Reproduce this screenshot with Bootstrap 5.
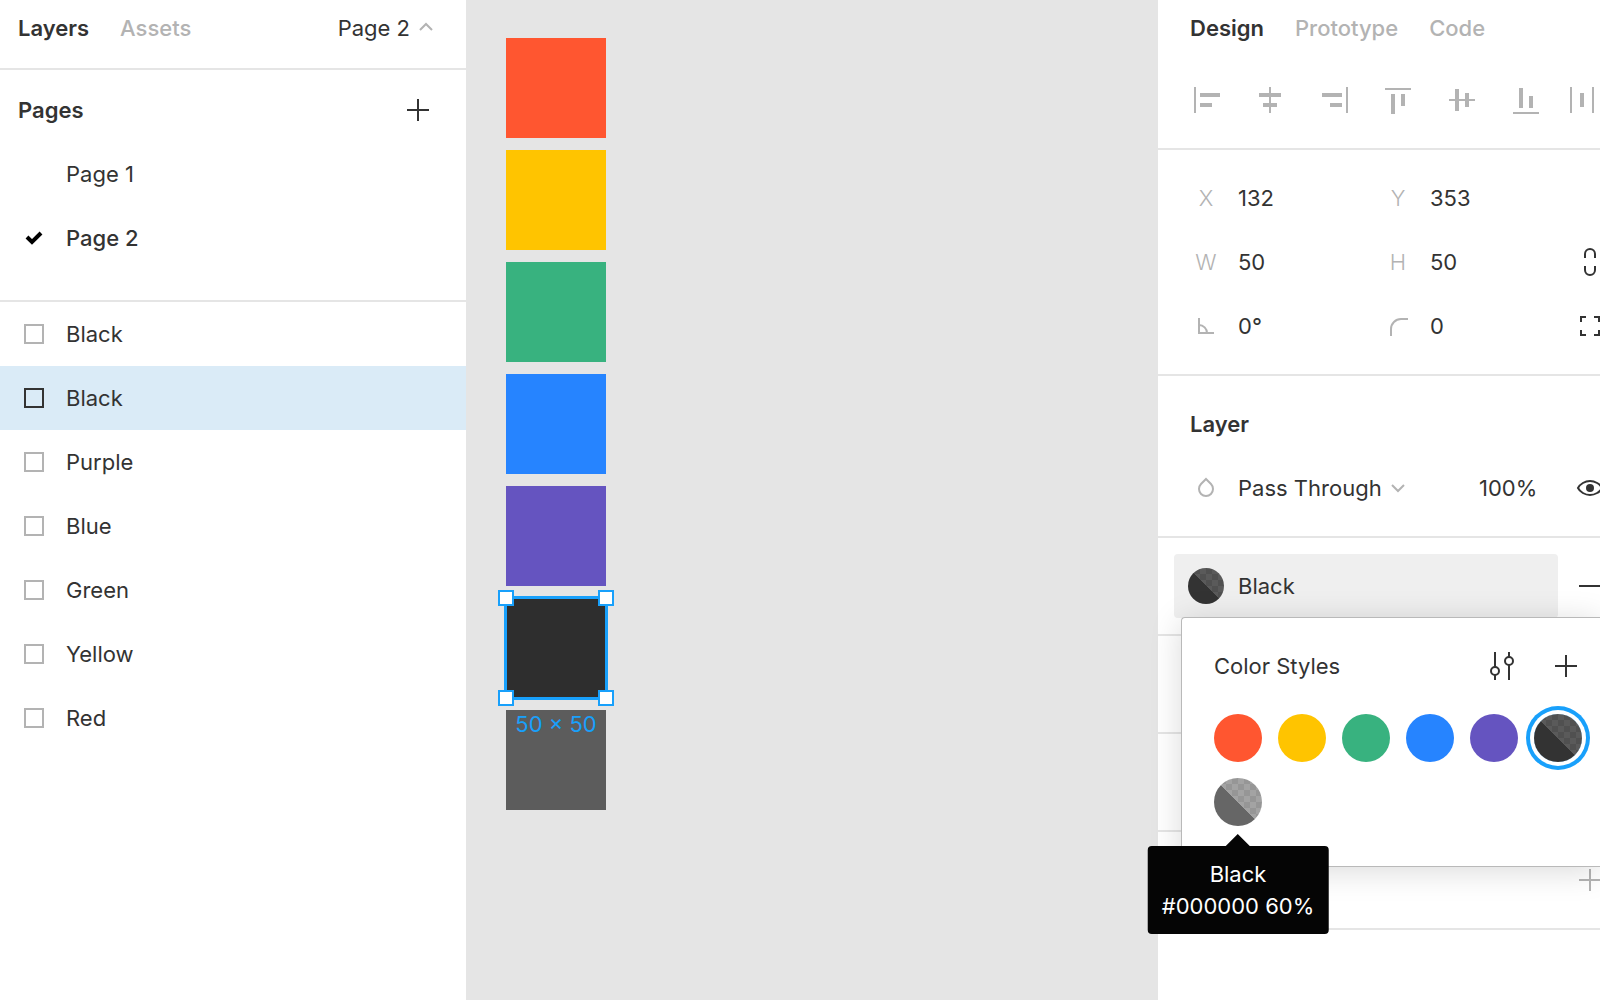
<!DOCTYPE html>
<html lang="en">
<head>
<meta charset="utf-8">
<meta name="viewport" content="width=device-width, initial-scale=1">
<title>Color styles</title>
<link href="https://cdn.jsdelivr.net/npm/bootstrap@5.3.0/dist/css/bootstrap.min.css" rel="stylesheet">
<style>
  :root { --ink: #333; --muted: #b3b3b3; --line: #e5e5e5; --accent: #18a0fb; --cell: 64px; }
  body { font: 400 22px/32px Inter, "Liberation Sans", sans-serif; color: var(--ink); background: #fff; }
  button, input, select { font: inherit; color: inherit; background: none; border: 0; padding: 0; border-radius: 0; }
  select { appearance: none; }
  svg { display: block; flex: none; }
  h2 { font-size: 22px; line-height: 32px; font-weight: 600; margin: 0; }
  .rule-b { border-bottom: 2px solid var(--line); }
  .tabs { height: 56px; gap: 31px; }
  .tabs button { font-weight: 500; color: var(--muted); }
  .tabs .on { font-weight: 600; color: var(--ink); }
  .line-row { display: flex; align-items: center; height: var(--cell); width: 100%; text-align: left; }
  .line-row.current { font-weight: 500; }
  .lead-icon { width: 66px; padding-left: 2px; flex: none; display: flex; justify-content: center; }
  .cellbox { width: var(--cell); height: var(--cell); flex: none; display: flex; align-items: center; justify-content: center; }

  .left-panel { width: 466px; flex: none; }
  .left-tabs { padding: 0 32px 0 18px; }
  .left-top { padding-bottom: 12px; }
  .pages { padding: 8px 0 30px; }
  .pages-head { padding-left: 18px; padding-right: 16px; }
  .shape { width: 20px; height: 20px; border: 2px solid var(--muted); }
  .picked { background: #daebf7; }
  .picked .shape { border-color: var(--ink); }

  .board { background: var(--line); padding: 38px 40px; }
  .stack { gap: 12px; }
  .tile { width: 100px; height: 100px; position: relative; }
  .selbox { position: absolute; inset: -2px; border: 3px solid var(--accent); }
  .grip { position: absolute; width: 16px; height: 16px; background: #fff; border: 2px solid var(--accent); }
  .g-n { top: -8px; } .g-s { bottom: -8px; } .g-w { left: -8px; } .g-e { right: -8px; }
  .dims { position: absolute; top: 100%; left: 0; right: 0; margin-top: 10px; text-align: center; color: var(--accent); white-space: nowrap; z-index: 1; }
  .c-red { background: #ff5630; } .c-yellow { background: #ffc400; } .c-green { background: #38b27f; }
  .c-blue { background: #2684ff; } .c-purple { background: #6554c0; }
  .c-black80 { background: #2e2e2e; } .c-black60 { background: #5c5c5c; }

  .right-panel { width: 442px; flex: none; }
  .right-tabs { padding-left: 32px; }
  .tools { padding: 12px 0 16px 16px; overflow: hidden; }
  .block { padding: 16px 0 16px 16px; }
  .block .line-row { overflow: hidden; }
  .field { width: 192px; flex: none; display: flex; align-items: center; }
  .field input { width: 112px; }
  .field label { font-weight: 300; color: var(--muted); }
  .blend { width: 241px; gap: 6px; }
  .opacity-box { width: 79px; }
  .fill-block { position: relative; }
  .fill-name { width: 384px; flex: none; background: #efefef; border-radius: 4px; }
  .side-tool { margin-left: 384px; }
  .blank { height: 98px; }

  .dot { width: 48px; height: 48px; border-radius: 50%; flex: none; }
  .dot-sm { width: 36px; height: 36px; }
  .split { background:
      linear-gradient(45deg, var(--solid) 50%, transparent 50%),
      repeating-conic-gradient(var(--chk1) 0 25%, var(--chk2) 0 50%) 0 0 / 12px 12px; }
  .k80 { --solid: #333; --chk1: #505050; --chk2: #5a5a5a; }
  .k60 { --solid: #666; --chk1: #969696; --chk2: #a3a3a3; }
  .chosen { box-shadow: 0 0 0 4px #fff, 0 0 0 8px var(--accent); }

  .styles-pop { position: absolute; top: 79px; left: 23px; right: 0; height: 250px; background: #fff;
    border: 1px solid #b9b9b9; border-right: 0; border-radius: 4px 0 0 4px; padding: 16px 0 0 32px;
    box-shadow: 0 4px 32px rgba(0,0,0,.15); z-index: 2; }
  .pop-head { height: var(--cell); padding-right: 2px; }
  .dots { gap: 16px; padding-top: 16px; }
  .tipped { position: relative; }
  .tip { position: absolute; top: 100%; left: 50%; transform: translateX(-50%); margin-top: 20px; padding: 12px 14px;
    background: #050505; color: #fff; border-radius: 4px; text-align: center; white-space: nowrap; }
  .tip::before { content: ""; position: absolute; left: 50%; margin-left: -12px; bottom: 100%;
    border: 12px solid transparent; border-top: 0; border-bottom-color: #050505; }
</style>
</head>
<body>
<div class="d-flex min-vh-100 overflow-hidden">

  <aside class="left-panel bg-white">
    <div class="left-top rule-b">
      <div class="tabs left-tabs d-flex align-items-center">
        <button type="button" class="on">Layers</button>
        <button type="button">Assets</button>
        <button type="button" class="ms-auto d-flex align-items-center gap-2 fw-normal text-reset">Page 2
          <svg width="16" height="16" viewBox="0 0 16 16" fill="none" stroke="#b3b3b3" stroke-width="2"><path d="M2 10l6-6 6 6"/></svg>
        </button>
      </div>
    </div>

    <section class="pages rule-b">
      <div class="line-row pages-head justify-content-between">
        <h2>Pages</h2>
        <button type="button" class="cellbox" aria-label="Add page">
          <svg width="22" height="22" viewBox="0 0 22 22" fill="#333"><path d="M10 0h2v10h10v2H12v10h-2V12H0v-2h10z"/></svg>
        </button>
      </div>
      <button type="button" class="line-row"><span class="lead-icon"></span>Page 1</button>
      <button type="button" class="line-row current"><span class="lead-icon">
        <svg width="18" height="14" viewBox="0 0 18 14" fill="none" stroke="#000" stroke-width="4"><path d="M2 6l5 5 9-9"/></svg></span>Page 2</button>
    </section>

    <nav class="d-flex flex-column" aria-label="Layers">
      <button type="button" class="line-row"><span class="lead-icon"><span class="shape"></span></span>Black</button>
      <button type="button" class="line-row picked"><span class="lead-icon"><span class="shape"></span></span>Black</button>
      <button type="button" class="line-row"><span class="lead-icon"><span class="shape"></span></span>Purple</button>
      <button type="button" class="line-row"><span class="lead-icon"><span class="shape"></span></span>Blue</button>
      <button type="button" class="line-row"><span class="lead-icon"><span class="shape"></span></span>Green</button>
      <button type="button" class="line-row"><span class="lead-icon"><span class="shape"></span></span>Yellow</button>
      <button type="button" class="line-row"><span class="lead-icon"><span class="shape"></span></span>Red</button>
    </nav>
  </aside>

  <main class="board flex-grow-1">
    <div class="stack d-flex flex-column">
      <div class="tile c-red"></div>
      <div class="tile c-yellow"></div>
      <div class="tile c-green"></div>
      <div class="tile c-blue"></div>
      <div class="tile c-purple"></div>
      <div class="tile c-black80 z-1">
        <div class="selbox"></div>
        <span class="grip g-n g-w"></span><span class="grip g-n g-e"></span>
        <span class="grip g-s g-w"></span><span class="grip g-s g-e"></span>
        <div class="dims">50 × 50</div>
      </div>
      <div class="tile c-black60"></div>
    </div>
  </main>

  <aside class="right-panel bg-white position-relative">
    <div class="tabs right-tabs d-flex align-items-center">
      <button type="button" class="on">Design</button>
      <button type="button">Prototype</button>
      <button type="button">Code</button>
    </div>

    <div class="tools d-flex rule-b">
      <button type="button" aria-label="Align left"><svg width="64" height="64" fill="#b3b3b3"><path d="M20 19h2v26h-2zM26 25h20v4H26zM26 35h12v4H26z"/></svg></button>
      <button type="button" aria-label="Align horizontal centers"><svg width="64" height="64" fill="#b3b3b3"><path d="M31 19h2v26h-2zM21 25h22v4H21zM25 35h14v4H25z"/></svg></button>
      <button type="button" aria-label="Align right"><svg width="64" height="64" fill="#b3b3b3"><path d="M44 19h2v26h-2zM20 25h20v4H20zM28 35h12v4H28z"/></svg></button>
      <button type="button" aria-label="Align top"><svg width="64" height="64" fill="#b3b3b3"><path d="M19 20h26v2H19zM25 26h4v20h-4zM35 26h4v12h-4z"/></svg></button>
      <button type="button" aria-label="Align vertical centers"><svg width="64" height="64" fill="#b3b3b3"><path d="M19 31h26v2H19zM25 21h4v22h-4zM35 25h4v14h-4z"/></svg></button>
      <button type="button" aria-label="Align bottom"><svg width="64" height="64" fill="#b3b3b3"><path d="M19 44h26v2H19zM25 20h4v20h-4zM35 28h4v12h-4z"/></svg></button>
      <button type="button" aria-label="Distribute"><svg width="64" height="64" fill="#b3b3b3"><path d="M12 19h2v26h-2zM34 19h2v26h-2zM22 25h4v14h-4z"/><path d="M42 29l4 4 4-4" fill="none" stroke="#b3b3b3" stroke-width="1"/></svg></button>
    </div>

    <section class="block rule-b">
      <div class="line-row">
        <div class="field"><label class="cellbox" for="px">X</label><input id="px" value="132"></div>
        <div class="field"><label class="cellbox" for="py">Y</label><input id="py" value="353"></div>
      </div>
      <div class="line-row">
        <div class="field"><label class="cellbox" for="pw">W</label><input id="pw" value="50"></div>
        <div class="field"><label class="cellbox" for="ph">H</label><input id="ph" value="50"></div>
        <button type="button" class="cellbox" aria-label="Constrain proportions">
          <svg width="64" height="64" fill="none" stroke="#333" stroke-width="2"><path d="M27 28v-4a5 5 0 0 1 10 0v4M27 36v4a5 5 0 0 0 10 0v-4"/></svg>
        </button>
      </div>
      <div class="line-row">
        <div class="field"><label class="cellbox" for="pr" aria-label="Rotation">
          <svg width="64" height="64" fill="none" stroke="#b3b3b3" stroke-width="2"><path d="M25 24v15h15M25 31a8 8 0 0 1 8 8"/></svg></label><input id="pr" value="0°"></div>
        <div class="field"><label class="cellbox" for="pc" aria-label="Corner radius">
          <svg width="64" height="64" fill="none" stroke="#b3b3b3" stroke-width="2"><path d="M25 42v-7a10 10 0 0 1 10-10h7"/></svg></label><input id="pc" value="0"></div>
        <button type="button" class="cellbox" aria-label="Independent corners">
          <svg width="64" height="64" fill="none" stroke="#333" stroke-width="2"><path d="M23 28v-5h5M36 23h5v5M41 36v5h-5M28 41h-5v-5"/></svg>
        </button>
      </div>
    </section>

    <section class="block rule-b">
      <div class="line-row ps-3"><h2>Layer</h2></div>
      <div class="line-row">
        <label class="cellbox" for="blend" aria-label="Blend mode">
          <svg width="64" height="64" fill="none" stroke="#b3b3b3" stroke-width="2"><path d="M32 23l5 5a7 7 0 0 1 2 5a7 7 0 0 1-14 0a7 7 0 0 1 2-5z"/></svg></label>
        <div class="blend d-flex align-items-center flex-shrink-0">
          <select id="blend"><option>Pass Through</option></select>
          <svg width="20" height="16" viewBox="0 0 20 16" fill="none" stroke="#b3b3b3" stroke-width="2"><path d="M4 5l6 6 6-6"/></svg>
        </div>
        <input class="opacity-box flex-shrink-0" aria-label="Opacity" value="100%">
        <button type="button" class="cellbox" aria-label="Visibility">
          <svg width="64" height="64" fill="none" stroke="#333" stroke-width="2"><path d="M20 32c2-4 7-7 12-7s10 3 12 7c-2 4-7 7-12 7s-10-3-12-7z"/><circle cx="32" cy="32" r="4" fill="#333" stroke="none"/></svg>
        </button>
      </div>
    </section>

    <section class="block rule-b fill-block">
      <div class="line-row">
        <button type="button" class="fill-name d-flex align-items-center">
          <span class="cellbox"><span class="dot dot-sm split k80"></span></span>Black</button>
        <button type="button" class="cellbox" aria-label="Remove fill"><svg width="22" height="2" fill="#333"><path d="M0 0h22v2H0z"/></svg></button>
      </div>

      <div class="styles-pop" role="dialog" aria-label="Color Styles">
        <div class="pop-head d-flex align-items-center">
          <span class="me-auto">Color Styles</span>
          <button type="button" aria-label="Edit styles">
            <svg width="64" height="64" fill="none" stroke="#333" stroke-width="2"><path d="M25 18v15M25 41v5M39 18v5M39 31v15"/><circle cx="25" cy="37" r="4"/><circle cx="39" cy="27" r="4"/></svg></button>
          <button type="button" class="cellbox" aria-label="Add style">
            <svg width="22" height="22" viewBox="0 0 22 22" fill="#333"><path d="M10 0h2v10h10v2H12v10h-2V12H0v-2h10z"/></svg></button>
        </div>
        <div class="dots d-flex flex-wrap">
          <button type="button" class="dot c-red" aria-label="Red"></button>
          <button type="button" class="dot c-yellow" aria-label="Yellow"></button>
          <button type="button" class="dot c-green" aria-label="Green"></button>
          <button type="button" class="dot c-blue" aria-label="Blue"></button>
          <button type="button" class="dot c-purple" aria-label="Purple"></button>
          <button type="button" class="dot split k80 chosen" aria-label="Black 80%"></button>
          <div class="tipped">
            <button type="button" class="dot split k60 d-block" aria-label="Black 60%"></button>
            <div class="tip" role="tooltip">Black<br>#000000 60%</div>
          </div>
        </div>
      </div>
    </section>
    <div class="blank rule-b"></div>
    <div class="blank rule-b"></div>
    <section class="block rule-b overflow-hidden">
      <div class="line-row">
        <button type="button" class="cellbox side-tool" aria-label="Add effect">
          <svg width="22" height="22" viewBox="0 0 22 22" fill="#b3b3b3"><path d="M10 0h2v10h10v2H12v10h-2V12H0v-2h10z"/></svg></button>
      </div>
    </section>
  </aside>
</div>
<script src="https://cdn.jsdelivr.net/npm/bootstrap@5.3.0/dist/js/bootstrap.bundle.min.js"></script>
</body>
</html>
